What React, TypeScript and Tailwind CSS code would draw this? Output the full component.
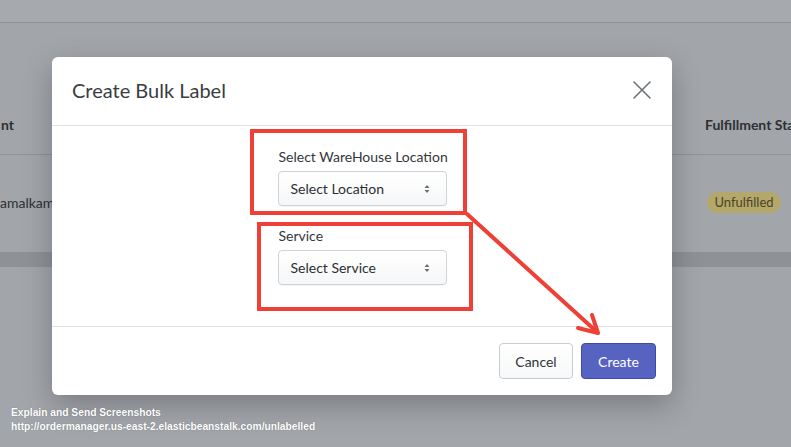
import React from "react";

function Caret() {
  return (
    <svg width="8" height="12" viewBox="0 0 8 12" className="shrink-0">
      <path d="M4 2 L6.5 5 L1.5 5 Z" fill="#6b6f75" />
      <path d="M4 10 L6.5 7 L1.5 7 Z" fill="#6b6f75" />
    </svg>
  );
}

function SelectBox({ text }: { text: string }) {
  return (
    <div className="w-[169px] h-[35px] border border-[#cfd3d8] rounded-[4px] bg-gradient-to-b from-[#ffffff] to-[#f6f7f8] flex items-center justify-between pl-[12px] pr-[15px] text-[14px] text-[#2b2f33] shadow-[0_1px_0_rgba(0,0,0,0.04)]">
      <span>{text}</span>
      <Caret />
    </div>
  );
}

export default function App() {
  return (
    <div
      className="relative w-[791px] h-[447px] overflow-hidden bg-[#a2a5aa]"
      style={{ fontFamily: 'Lato, "Noto Sans", sans-serif' }}
    >
      {/* background page */}
      <div className="flex flex-col">
        <div className="h-[23px] border-b border-[#8e9196] bg-[#a6a9ae]" />
        <div className="h-[132px] flex items-end border-b border-[#8f9297]">
          <div className="w-full h-[60px] flex items-center justify-between text-[14px] font-bold text-[#2e3034]">
            <span className="pl-[1px]">nt</span>
            <span className="w-[86px] whitespace-nowrap overflow-hidden">Fulfillment Sta</span>
          </div>
        </div>
        <div className="h-[97px] flex items-center justify-between text-[14px] text-[#2e3034]">
          <span className="-mt-[2px]">amalkam</span>
          <span className="mr-[10px] -mt-[2px] w-[74px] text-center h-[21px] leading-[21px] rounded-full bg-[#b3a86a] text-[13px] text-[#4a4427]">
            Unfulfilled
          </span>
        </div>
        <div className="h-[15px] bg-[#8e9196]" />
      </div>

      {/* modal */}
      <div className="absolute left-[52px] top-[57px] w-[620px] h-[338px] bg-white rounded-[6px] shadow-[0_10px_30px_rgba(0,0,0,0.25)] flex flex-col">
        <div className="h-[69px] flex items-center justify-between pl-[20px] pr-[20px] border-b border-[#dee2e6]">
          <span className="text-[20px] text-[#3a3d41] -mt-[2px]">Create Bulk Label</span>
          <svg width="20" height="20" viewBox="0 0 20 20" className="-mt-[2px]">
            <path d="M2 2 L18 18 M18 2 L2 18" stroke="#6c7177" strokeWidth="1.6" strokeLinecap="round" />
          </svg>
        </div>
        <div className="h-[200px] flex justify-center">
          <div className="w-[169px] flex flex-col pt-[21px] text-[14px] text-[#33373b]">
            <div className="leading-[20px] pl-[1px] whitespace-nowrap">Select WareHouse Location</div>
            <div className="mt-[4px]">
              <SelectBox text="Select Location" />
            </div>
            <div className="leading-[20px] pl-[1px] mt-[20px]">Service</div>
            <div className="mt-[4px]">
              <SelectBox text="Select Service" />
            </div>
          </div>
        </div>
        <div className="flex-1 border-t border-[#dee2e6] flex items-start justify-end pt-[16px] pr-[16px] gap-[8px]">
          <button className="w-[74px] h-[36px] rounded-[4px] border border-[#c7ccd1] bg-gradient-to-b from-[#ffffff] to-[#f7f8f9] text-[14px] text-[#2f3337]">
            Cancel
          </button>
          <button className="w-[75px] h-[36px] rounded-[4px] border border-[#3d4ba8] bg-[#5763c1] text-[14px] text-white">
            Create
          </button>
        </div>
      </div>

      {/* bottom caption */}
      <div
        className="absolute left-[11px] top-[406px] text-white text-[10.25px] font-bold leading-[14px] [text-shadow:0_0_1px_rgba(0,0,0,0.35)]"
        style={{ fontFamily: '"Liberation Sans", Arial, sans-serif' }}
      >
        <div>Explain and Send Screenshots</div>
        <div>http://ordermanager.us-east-2.elasticbeanstalk.com/unlabelled</div>
      </div>

      {/* annotation overlay */}
      <svg className="absolute left-0 top-0 pointer-events-none" width="791" height="447" viewBox="0 0 791 447">
        <rect x="252" y="131" width="213" height="82" fill="none" stroke="#ee4036" strokeWidth="4" />
        <rect x="259" y="224" width="212" height="85" fill="none" stroke="#ee4036" strokeWidth="4" />
        <path d="M467 214 L597 332" stroke="#ee4036" strokeWidth="4" strokeLinecap="round" fill="none" />
        <path d="M578 328 L598 333 L592 315" stroke="#ee4036" strokeWidth="4" strokeLinecap="round" strokeLinejoin="round" fill="none" />
      </svg>
    </div>
  );
}
